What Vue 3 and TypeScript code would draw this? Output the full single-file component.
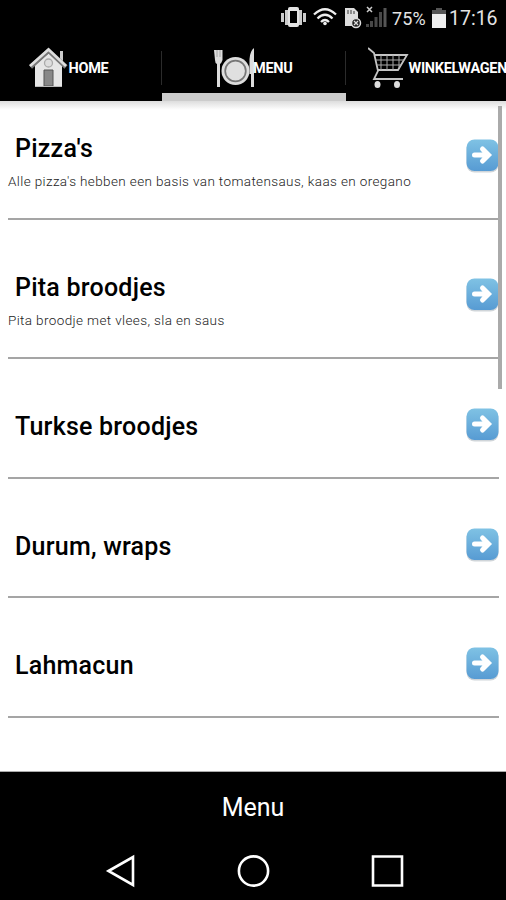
<script setup lang="ts">
interface Category {
  title: string
  description?: string
}

const categories: Category[] = [
  { title: "Pizza's", description: "Alle pizza's hebben een basis van tomatensaus, kaas en oregano" },
  { title: 'Pita broodjes', description: 'Pita broodje met vlees, sla en saus' },
  { title: 'Turkse broodjes' },
  { title: 'Durum, wraps' },
  { title: 'Lahmacun' },
]
const gridX: number[] = [13, 19, 25, 31]
</script>

<template>
  <div class="screen">
    <header class="status">
      <svg class="status-icons" width="120" height="36" viewBox="0 0 120 36">
        <g fill="#ccc">
          <path d="M1 13h3v9H1zM5 10h4v15H5zM18 10h4v15h-4zM23 13h3v9h-3z" />
          <rect x="8" y="7" width="11" height="20" rx="2" fill="#e4e4e4" />
        </g>
        <rect x="10" y="11" width="7" height="12" fill="#000" />
        <g fill="none" stroke="#eee" stroke-width="2.300">
          <path d="M34 14.500Q45 4 56 14.500M37.500 18.500Q45 11 52.500 18.500M41 22Q45 18 49 22" />
        </g>
        <circle cx="45" cy="23.500" r="1.800" fill="#eee" />
        <path d="M65 8h9l4 4v7l-3 7H65z" fill="#ddd" />
        <path d="M68 10v4M71 10v4M74 11v3" stroke="#555" stroke-width="1.200" />
        <circle cx="76" cy="23" r="4.500" fill="#222" stroke="#ddd" stroke-width="1.500" />
        <path d="M74 21l4 4m0-4l-4 4" stroke="#ddd" stroke-width="1.300" />
        <path d="M87 7l5 5m0-5l-5 5" stroke="#ccc" stroke-width="1.500" />
        <path d="M86 24h3v3h-3zM90 21h3v6h-3zM94.500 17h3v10h-3zM99 12h3v15h-3z" fill="#484848" />
        <path d="M103.500 8h3v19h-3z" fill="#555" />
      </svg>
      <span class="percent">75%</span>
      <svg class="battery" width="14" height="20" viewBox="0 0 14 20">
        <path d="M4 0h6v2h4v5H0V2h4z" fill="#555" />
        <path d="M0 6h14v14H0z" fill="#eee" />
      </svg>
      <span class="clock">17:16</span>
    </header>

    <nav class="tabs">
      <div class="tab home">
        <svg width="39" height="42" viewBox="0 0 39 42">
          <path d="M31 4h3v12h-3z" fill="#ccc" />
          <path d="M6 18L20 6l13 12v22H6z" fill="#e6e6e6" />
          <path d="M1.500 20L19.500 3.500 37 20" fill="none" stroke="#777" stroke-width="4.500" />
          <path d="M1 19L19.500 2.500 37 19" fill="none" stroke="#dedede" stroke-width="2.600" />
          <circle cx="19.500" cy="16" r="4" fill="#ddd" stroke="#aaa" stroke-width="1.300" />
          <path d="M15 23h9v16h-9z" fill="#888" stroke="#555" />
          <path d="M6 39.500h27" stroke="#bbb" />
        </svg>
        <span>HOME</span>
      </div>
      <div class="tab menu active">
        <svg width="40" height="42" viewBox="0 0 40 42">
          <path d="M0 3h8.500v10q-1 3-2.500 4v23H3V17q-2-1-2-4z" fill="#ddd" />
          <path d="M3 3v7M6 3v7" stroke="#999" stroke-width=".8" />
          <circle cx="21.500" cy="24" r="14" fill="#ddd" />
          <circle cx="21.500" cy="24" r="10.300" fill="#e0e0e0" stroke="#777" stroke-width="1.700" />
          <path d="M40 1v39h-3V27h-1.500V12q.5-8 4.500-11z" fill="#ddd" />
        </svg>
        <span>MENU</span>
      </div>
      <div class="tab cart">
        <svg width="42" height="42" viewBox="0 0 42 42">
          <g fill="none" stroke="#c4c4c4" stroke-width="1.800">
            <path d="M0 1l6 5 4 18-4 8h29" />
            <path d="M7 8h32l-9 15H10" />
          </g>
          <path v-for="x in gridX" :key="x" :d="`M${x} 8v${x > 28 ? 13 : 15}`" stroke="#aaa" stroke-width="1" />
          <path d="M8 13h28M9 18h24" stroke="#aaa" stroke-width="1" />
          <ellipse cx="9.500" cy="37.500" rx="3" ry="3.500" fill="#ddd" />
          <ellipse cx="29" cy="37.500" rx="3" ry="3.500" fill="#ddd" />
        </svg>
        <span>WINKELWAGEN</span>
      </div>
    </nav>

    <main class="list">
      <section v-for="item in categories" :key="item.title" class="row" :class="{ detailed: item.description }">
        <div class="copy">
          <h2>{{ item.title }}</h2>
          <p v-if="item.description">{{ item.description }}</p>
        </div>
        <svg class="arrow" width="34" height="35" viewBox="0 0 34 35">
          <defs>
            <linearGradient id="blue" x1="0" y1="0" x2="0" y2="1">
              <stop offset="0" stop-color="#7fc2e4" />
              <stop offset="1" stop-color="#579bd3" />
            </linearGradient>
          </defs>
          <rect x="1.500" y="2" width="32" height="31.500" rx="8" fill="#d0d5d9" />
          <rect x="1.500" y=".5" width="32" height="31.500" rx="8" fill="url(#blue)" />
          <path d="M9.500 16h13M17.500 10l6 6-6 6" fill="none" stroke="#fff" stroke-width="5" stroke-linecap="round" stroke-linejoin="miter" />
        </svg>
      </section>
      <div class="scrollbar"></div>
    </main>

    <footer class="title-bar"><span>Menu</span></footer>
    <div class="system-nav">
      <svg width="34" height="34" viewBox="0 0 34 34"><path d="M6.500 17L31 3v28z" /></svg>
      <svg width="34" height="34" viewBox="0 0 34 34"><circle cx="17.500" cy="17" r="14.600" /></svg>
      <svg width="34" height="34" viewBox="0 0 34 34"><path d="M3 2.500h29v29H3z" /></svg>
    </div>
  </div>
</template>

<style>
body { margin: 0; background: #000; }
</style>

<style scoped>
.screen { width: 506px; height: 900px; overflow: hidden; display: flex; flex-direction: column; background: #000; color: #fff; font-family: Roboto, "Liberation Sans", sans-serif; }
.status { height: 36px; flex: none; display: flex; align-items: center; padding-left: 280px; box-sizing: border-box; white-space: nowrap; }
.status-icons { flex: none; width: 120px; margin-right: -8px; }
.percent { width: 40px; font-size: 18px; color: #e4e4e4; letter-spacing: .1px; }
.battery { flex: none; }
.clock { margin-left: 3px; font-size: 19.500px; color: #e4e4e4; }
.tabs { height: 65px; flex: none; display: flex; }
.tab { position: relative; box-sizing: border-box; flex: none; width: 184px; height: 65px; display: flex; align-items: flex-start; padding-top: 11px; font-size: 14.500px; font-weight: 700; white-space: nowrap; letter-spacing: -.3px; }
.tab svg { flex: none; }
.tab span { line-height: 44px; }
.home { width: 162px; padding-left: 29px; }
.home span { margin-left: .5px; }
.menu { padding-left: 52px; border-bottom: 8px solid #ccc; }
.menu span { margin-left: -1px; }
.cart { width: 160px; padding-left: 22px; }
.cart span { margin-left: -1.500px; }
.tab + .tab::before { content: ""; position: absolute; left: -1px; top: 15px; width: 1px; height: 34px; background: #2b2b2b; }
.list { position: relative; height: 670.500px; flex: none; box-sizing: border-box; background: linear-gradient(#ddd, #fff 9px); color: #000; padding: 0 7px 0 8px; overflow: hidden; border-bottom: 1px solid #aaa; }
.row { display: flex; justify-content: space-between; height: 119.700px; box-sizing: border-box; padding-top: 52px; border-bottom: 2px solid #a5a5a5; }
.row.detailed { height: 139px; }
.row:first-child { height: 119px; padding-top: 32px; }
h2 { margin: 0 0 0 7px; font-size: 25px; line-height: 31px; font-weight: 500; white-space: nowrap; letter-spacing: .23px; }
p { margin: 8px 0 0; font-size: 13.500px; line-height: 18px; font-weight: 300; white-space: nowrap; color: #222; letter-spacing: .38px; }
.arrow { flex: none; margin-top: -3px; }
.detailed .arrow { margin-top: 6px; }
.scrollbar { position: absolute; right: 4px; top: 5px; width: 4px; height: 283px; background: #aaa; }
.title-bar { height: 71.500px; flex: none; display: flex; align-items: center; justify-content: center; font-size: 25px; }
.system-nav { height: 57px; flex: none; display: flex; align-items: flex-start; justify-content: center; gap: 100px; margin-top: -4px; padding-top: 0; }
.system-nav svg { flex: none; fill: none; stroke: #fff; stroke-width: 2.600; margin-top: 14px; }
.system-nav { margin-top: -3px; }
</style>
